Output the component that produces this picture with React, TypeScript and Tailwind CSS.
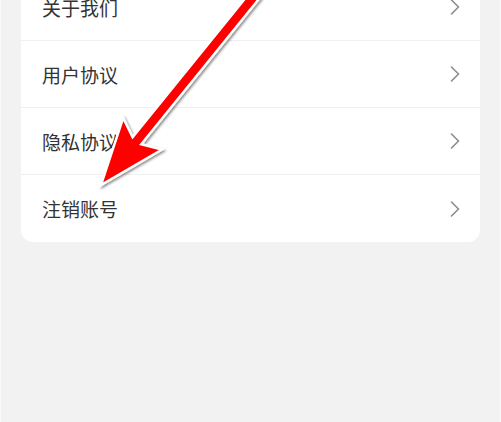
import React from "react";

const items = ["关于我们", "用户协议", "隐私协议", "注销账号"];

function Chevron() {
  return (
    <svg width="10" height="16" viewBox="0 0 10 16" className="shrink-0">
      <path d="M1.5 1 L8.5 8 L1.5 15" fill="none" stroke="#8c8c8c" strokeWidth="1.6" strokeLinecap="round" strokeLinejoin="round" />
    </svg>
  );
}

export default function App() {
  return (
    <div
      className="relative w-[501px] h-[422px] overflow-hidden bg-[#f2f2f2] border-l border-r border-[#fafafa]"
      style={{ fontFamily: '"Noto Sans CJK SC", "Noto Sans", sans-serif' }}
    >
      <div className="mx-[20px] mt-[-26px] bg-white rounded-xl">
        {items.map((t, i) => (
          <div
            key={t}
            className={`flex items-center justify-between h-[67px] pl-[21px] pr-[20px] ${i < items.length - 1 ? "border-b border-[#efefef]" : ""}`}
          >
            <span className="text-[19px] leading-none text-[#333333]">{t}</span>
            <Chevron />
          </div>
        ))}
      </div>

      <svg
        className="absolute left-0 top-0 pointer-events-none"
        width="501"
        height="422"
        viewBox="0 0 501 422"
      >
        <defs>
          <filter id="sh" x="-20%" y="-20%" width="140%" height="140%">
            <feDropShadow dx="1.5" dy="1.5" stdDeviation="1.2" floodColor="#000" floodOpacity="0.45" />
          </filter>
        </defs>
        <polygon
          points="100,185 122.2,117.9 131.6,137.3 284.7,-51.6 293.3,-44.7 140.2,144.2 161,149.5"
          fill="#ff0000"
          stroke="#ffffff"
          strokeWidth="2.4"
          strokeLinejoin="miter"
          filter="url(#sh)"
        />
      </svg>
    </div>
  );
}
